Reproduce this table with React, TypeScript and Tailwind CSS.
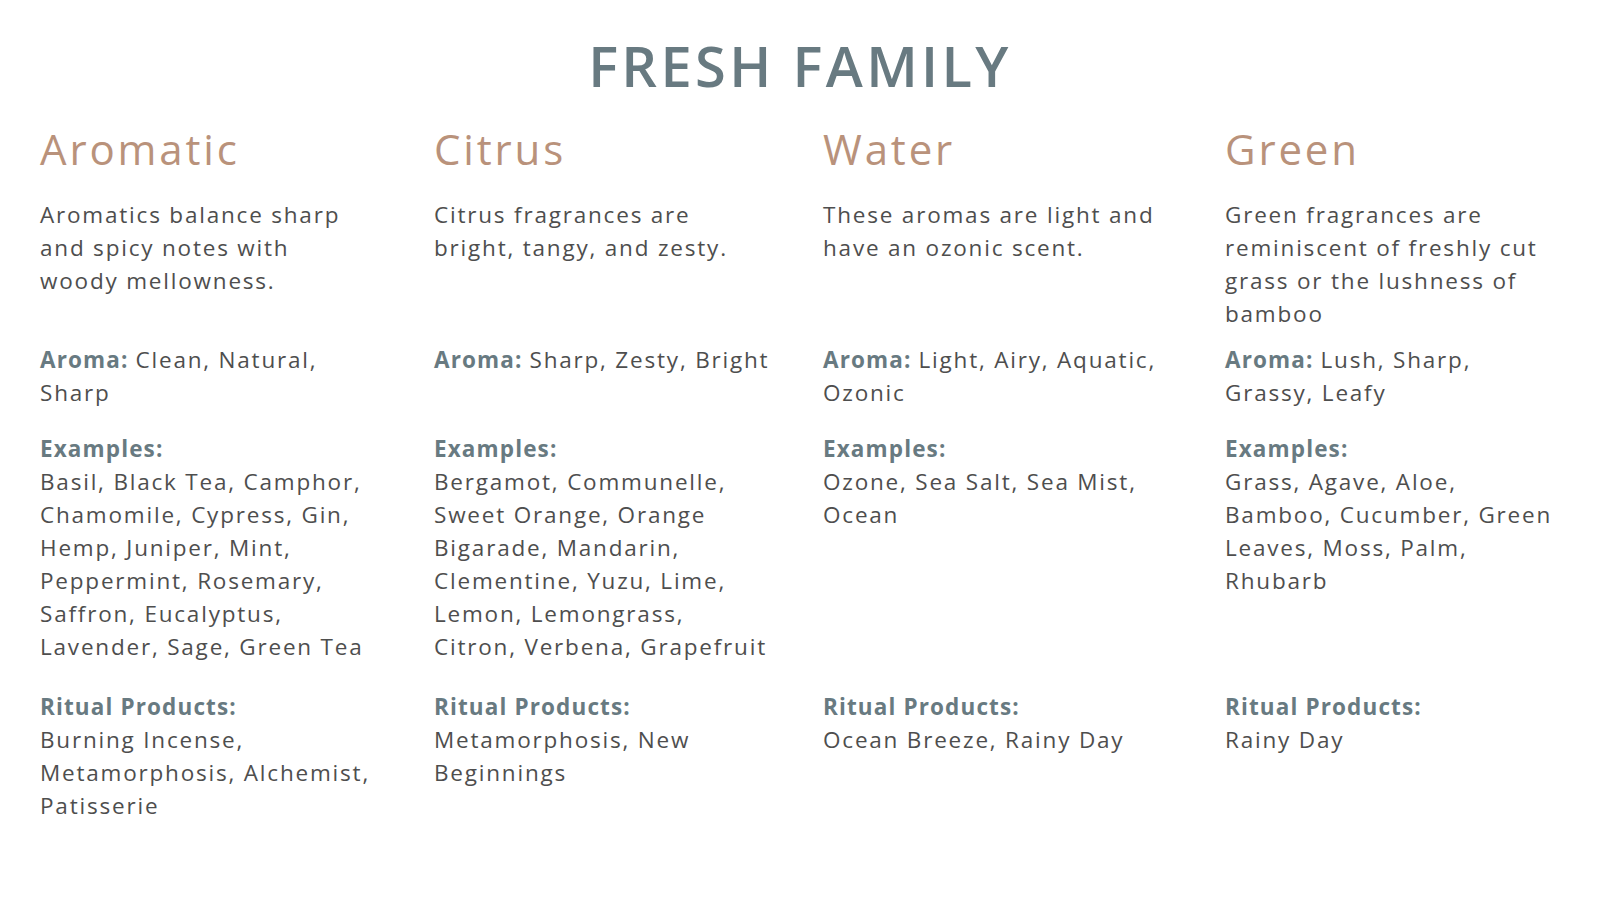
import React from "react";

type Col = {
  name: string;
  desc: string[];
  aroma: string[];
  examples: string[];
  ritual: string[];
};

const cols: Col[] = [
  {
    name: "Aromatic",
    desc: ["Aromatics balance sharp", "and spicy notes with", "woody mellowness."],
    aroma: ["Clean, Natural,", "Sharp"],
    examples: [
      "Basil, Black Tea, Camphor,",
      "Chamomile, Cypress, Gin,",
      "Hemp, Juniper, Mint,",
      "Peppermint, Rosemary,",
      "Saffron, Eucalyptus,",
      "Lavender, Sage, Green Tea",
    ],
    ritual: ["Burning Incense,", "Metamorphosis, Alchemist,", "Patisserie"],
  },
  {
    name: "Citrus",
    desc: ["Citrus fragrances are", "bright, tangy, and zesty."],
    aroma: ["Sharp, Zesty, Bright"],
    examples: [
      "Bergamot, Communelle,",
      "Sweet Orange, Orange",
      "Bigarade, Mandarin,",
      "Clementine, Yuzu, Lime,",
      "Lemon, Lemongrass,",
      "Citron, Verbena, Grapefruit",
    ],
    ritual: ["Metamorphosis, New", "Beginnings"],
  },
  {
    name: "Water",
    desc: ["These aromas are light and", "have an ozonic scent."],
    aroma: ["Light, Airy, Aquatic,", "Ozonic"],
    examples: ["Ozone, Sea Salt, Sea Mist,", "Ocean"],
    ritual: ["Ocean Breeze, Rainy Day"],
  },
  {
    name: "Green",
    desc: [
      "Green fragrances are",
      "reminiscent of freshly cut",
      "grass or the lushness of",
      "bamboo",
    ],
    aroma: ["Lush, Sharp,", "Grassy, Leafy"],
    examples: [
      "Grass, Agave, Aloe,",
      "Bamboo, Cucumber, Green",
      "Leaves, Moss, Palm,",
      "Rhubarb",
    ],
    ritual: ["Rainy Day"],
  },
];

function Lines({ lines }: { lines: string[] }) {
  return (
    <>
      {lines.map((l, i) => (
        <div key={i} className="whitespace-nowrap">
          {l}
        </div>
      ))}
    </>
  );
}

const label = "font-bold text-[#687a81] tracking-[0.05em]";

export default function App() {
  return (
    <div
      className="w-[1600px] h-[900px] bg-white overflow-hidden text-[#4e4e4e]"
      style={{ fontFamily: '"Open Sans", "Noto Sans", sans-serif' }}
    >
      <h1 className="pt-[33px] text-center text-[56px] leading-[64px] font-semibold text-[#687a81] tracking-[0.06em]">
        FRESH FAMILY
      </h1>
      <div className="mt-[27px] pl-[40px] grid grid-cols-[394px_389px_402px_1fr] text-[22.5px] leading-[33px] tracking-[0.08em]">
        {cols.map((c) => (
          <div key={c.name + "h"} className="text-[42px] leading-[50px] text-[#b9927b] tracking-[0.068em]">
            {c.name}
          </div>
        ))}
        {cols.map((c) => (
          <div key={c.name + "d"} className="mt-[24px]">
            <Lines lines={c.desc} />
          </div>
        ))}
        {cols.map((c) => (
          <div key={c.name + "a"} className="mt-[13px]">
            {c.aroma.map((l, i) => (
              <div key={i} className="whitespace-nowrap">
                {i === 0 && <span className={label}>Aroma: </span>}
                {l}
              </div>
            ))}
          </div>
        ))}
        {cols.map((c) => (
          <div key={c.name + "e"} className="mt-[23px]">
            <div className={label}>Examples:</div>
            <Lines lines={c.examples} />
          </div>
        ))}
        {cols.map((c) => (
          <div key={c.name + "r"} className="mt-[27px]">
            <div className={label}>Ritual Products:</div>
            <Lines lines={c.ritual} />
          </div>
        ))}
      </div>
    </div>
  );
}
